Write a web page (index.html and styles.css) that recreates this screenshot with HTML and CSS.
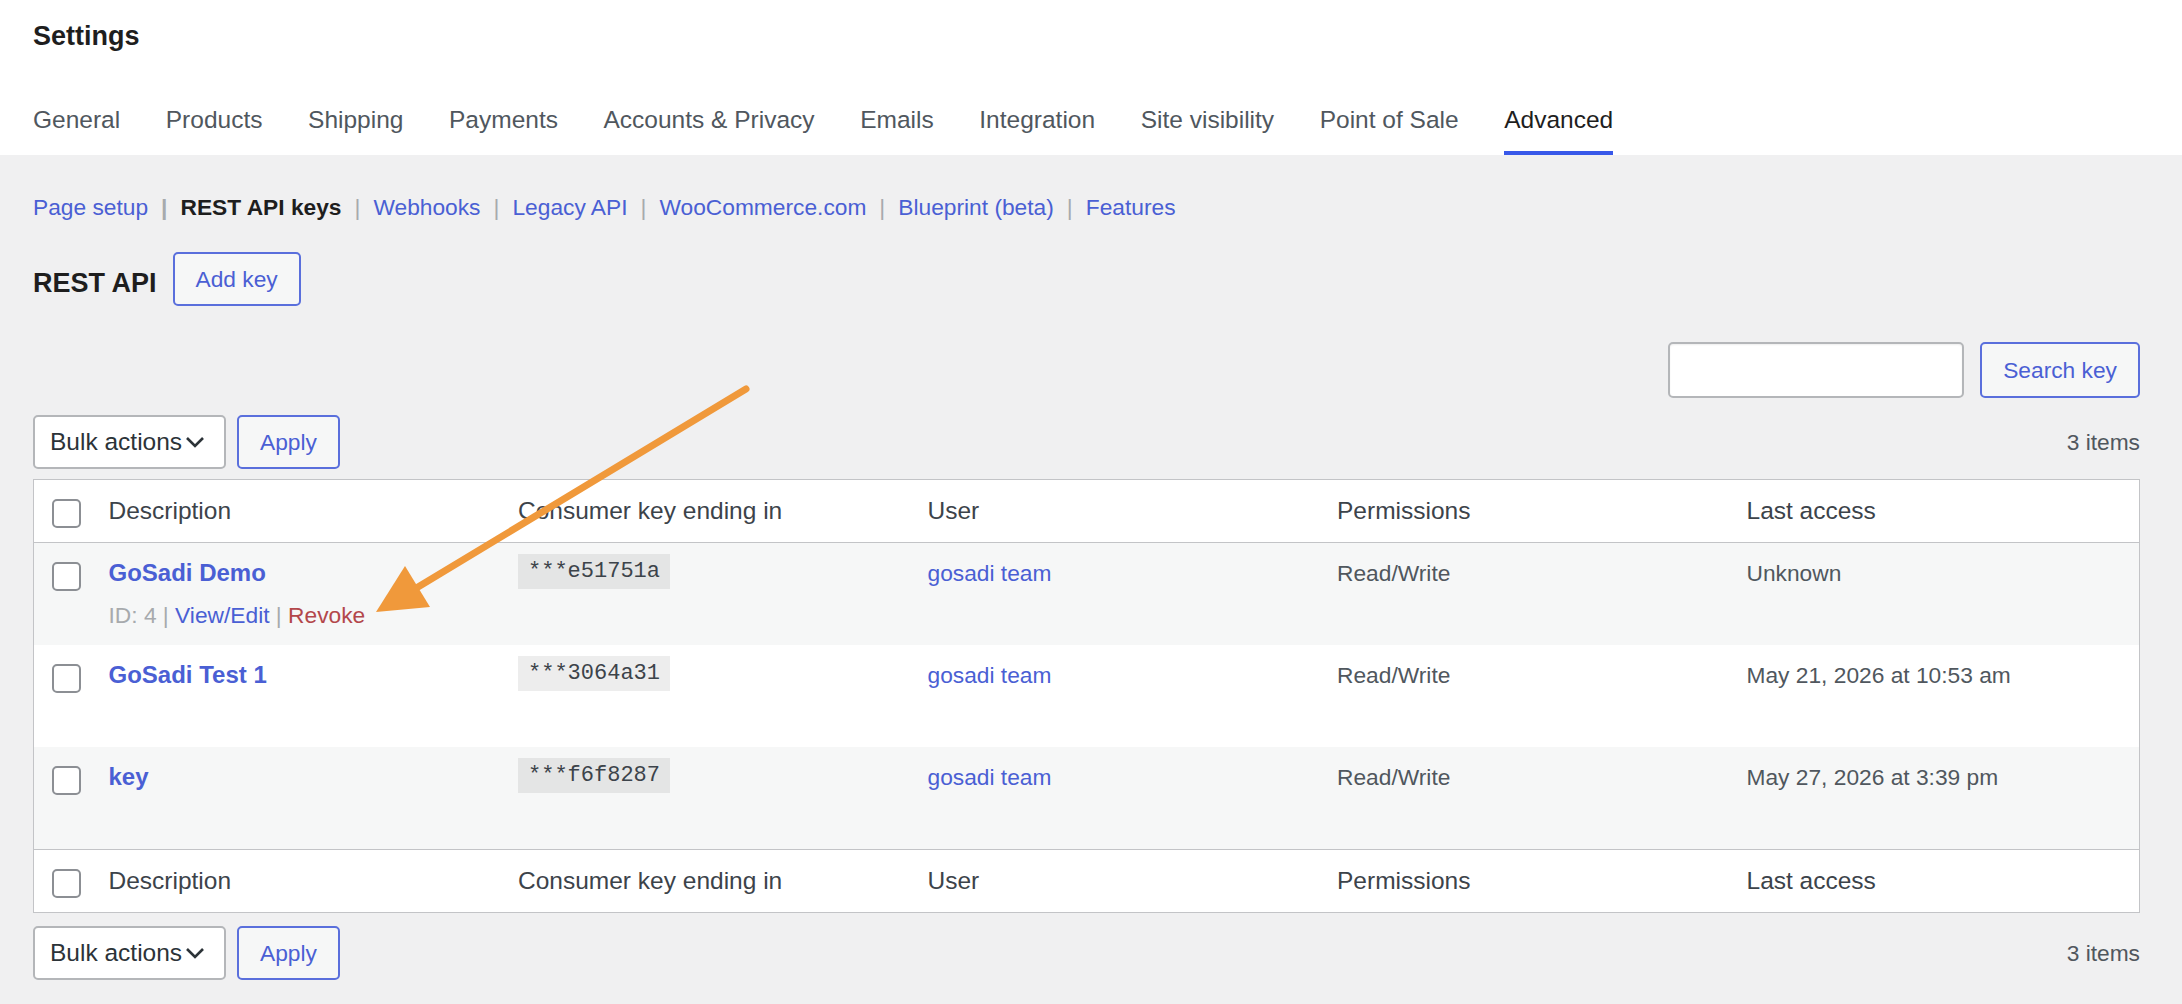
FILE: index.html
```html
<!DOCTYPE html>
<html lang="en">
<head>
  <meta charset="UTF-8" />
  <meta name="viewport" content="width=device-width, initial-scale=1.0"/>
  <title>Settings ‹ Advanced ‹ REST API</title>
  <link rel="stylesheet" href="styles.css">
</head>
<body>

  <header class="settings-header">
    <h1>Settings</h1>
    <nav class="tabs">
      <a class="tab" href="#">General</a>
      <a class="tab" href="#">Products</a>
      <a class="tab" href="#">Shipping</a>
      <a class="tab" href="#">Payments</a>
      <a class="tab" href="#">Accounts &amp; Privacy</a>
      <a class="tab" href="#">Emails</a>
      <a class="tab" href="#">Integration</a>
      <a class="tab" href="#">Site visibility</a>
      <a class="tab" href="#">Point of Sale</a>
      <a class="tab active" href="#">Advanced</a>
    </nav>
  </header>

  <div class="wrap">
    <ul class="subnav">
      <li><a href="#">Page setup</a></li>
      <li class="current">REST API keys</li>
      <li><a href="#">Webhooks</a></li>
      <li><a href="#">Legacy API</a></li>
      <li><a href="#">WooCommerce.com</a></li>
      <li><a href="#">Blueprint (beta)</a></li>
      <li><a href="#">Features</a></li>
    </ul>

    <div class="title-row">
      <h2>REST API</h2>
      <a class="button" href="#">Add key</a>
    </div>

    <div class="search-box">
      <input class="search-input" type="search">
      <button class="button" type="button">Search key</button>
    </div>

    <div class="tablenav">
      <div class="bulk">
        <div class="select">
          <span>Bulk actions</span>
          <svg width="20" height="14" viewBox="0 0 20 14"><polyline points="2,3 10,11 18,3" fill="none" stroke="#2c3338" stroke-width="2.6"/></svg>
        </div>
        <button class="button" type="button">Apply</button>
      </div>
      <span class="count">3 items</span>
    </div>

    <table class="keys">
      <thead>
        <tr>
          <th class="check-column"><input class="check" type="checkbox"></th>
          <th class="col">Description</th>
          <th class="col">Consumer key ending in</th>
          <th class="col">User</th>
          <th class="col">Permissions</th>
          <th>Last access</th>
        </tr>
      </thead>
      <tbody>
        <tr>
          <td class="check-column"><input class="check" type="checkbox"></td>
          <td>
            <a class="row-title" href="#">GoSadi Demo</a>
            <div class="row-actions">ID: 4 | <a href="#">View/Edit</a> | <a class="revoke" href="#">Revoke</a></div>
          </td>
          <td><code>***e51751a</code></td>
          <td><a href="#">gosadi team</a></td>
          <td>Read/Write</td>
          <td>Unknown</td>
        </tr>
        <tr>
          <td class="check-column"><input class="check" type="checkbox"></td>
          <td>
            <a class="row-title" href="#">GoSadi Test 1</a>
            <div class="row-actions hidden">ID: 3 | <a href="#">View/Edit</a> | <a class="revoke" href="#">Revoke</a></div>
          </td>
          <td><code>***3064a31</code></td>
          <td><a href="#">gosadi team</a></td>
          <td>Read/Write</td>
          <td>May 21, 2026 at 10:53 am</td>
        </tr>
        <tr>
          <td class="check-column"><input class="check" type="checkbox"></td>
          <td>
            <a class="row-title" href="#">key</a>
            <div class="row-actions hidden">ID: 5 | <a href="#">View/Edit</a> | <a class="revoke" href="#">Revoke</a></div>
          </td>
          <td><code>***f6f8287</code></td>
          <td><a href="#">gosadi team</a></td>
          <td>Read/Write</td>
          <td>May 27, 2026 at 3:39 pm</td>
        </tr>
      </tbody>
      <tfoot>
        <tr>
          <th class="check-column"><input class="check" type="checkbox"></th>
          <th>Description</th>
          <th>Consumer key ending in</th>
          <th>User</th>
          <th>Permissions</th>
          <th>Last access</th>
        </tr>
      </tfoot>
    </table>

    <div class="tablenav bottom">
      <div class="bulk">
        <div class="select">
          <span>Bulk actions</span>
          <svg width="20" height="14" viewBox="0 0 20 14"><polyline points="2,3 10,11 18,3" fill="none" stroke="#2c3338" stroke-width="2.6"/></svg>
        </div>
        <button class="button" type="button">Apply</button>
      </div>
      <span class="count">3 items</span>
    </div>
  </div>

  <!-- annotation arrow pointing at Revoke -->
  <svg class="callout" width="2182" height="1004" viewBox="0 0 2182 1004">
    <line x1="746" y1="389" x2="418" y2="587" stroke="#f0993b" stroke-width="7" stroke-linecap="round"/>
    <polygon points="376,612 430,607 405,566" fill="#f0993b"/>
  </svg>

</body>
</html>
```

FILE: styles.css
```css
* {
  box-sizing: border-box;
}

html, body {
  margin: 0;
  padding: 0;
  background: #f0f0f1;
  font-family: "Liberation Sans", Arial, sans-serif;
  font-size: 22.75px;
  color: #3c434a;
}

body {
  position: relative;
  min-height: 1004px;
}

a {
  color: #4a5fd4;
  text-decoration: none;
}

.settings-header {
  background: #fff;
  padding: 0 42px 0 33px;
}

.settings-header h1 {
  margin: 0;
  font-size: 27px;
  line-height: 73px;
  font-weight: 700;
  color: #1e1e1e;
}

.tabs {
  display: flex;
  gap: 45.6px;
}

.tab {
  font-size: 24.5px;
  line-height: 34px;
  padding: 30px 0 14px;
  border-bottom: 4px solid transparent;
  color: #50575e;
}

.tab.active {
  color: #1e1e1e;
  border-bottom-color: #3858e9;
}

.wrap {
  padding: 0 42px 40px 33px;
}

.subnav {
  list-style: none;
  margin: 35px 0 0;
  padding: 0;
  display: flex;
  line-height: 34px;
}

.subnav li + li::before {
  content: "|";
  color: #a7aaad;
  margin: 0 13px;
}

.subnav .current {
  color: #1e1e1e;
  font-weight: 700;
}

.title-row {
  display: flex;
  align-items: center;
  gap: 16px;
  margin-top: 28px;
}

.title-row h2 {
  margin: 9px 0 0;
  font-size: 27px;
  line-height: 27px;
  font-weight: 700;
  color: #1e1e1e;
}

.button {
  display: inline-flex;
  align-items: center;
  height: 54px;
  padding: 0 21px;
  border: 2px solid #5a6fdc;
  border-radius: 5px;
  background: #f6f7f7;
  color: #4a5fd4;
  font-family: inherit;
  font-size: 22.75px;
  cursor: pointer;
}

.search-box {
  display: flex;
  justify-content: flex-end;
  gap: 16px;
  margin-top: 36px;
}

.search-input {
  width: 296px;
  height: 56px;
  border: 2px solid #b4b6b9;
  border-radius: 5px;
  background: #fff;
  box-shadow: inset 0 1px 2px rgba(0, 0, 0, 0.07);
  font-family: inherit;
}

.search-box .button {
  height: 56px;
}

.tablenav {
  display: flex;
  justify-content: space-between;
  align-items: center;
  margin-top: 17px;
}

.tablenav.bottom {
  margin-top: 13px;
}

.bulk {
  display: flex;
  gap: 11px;
}

.select {
  width: 193px;
  height: 54px;
  display: flex;
  align-items: center;
  gap: 3px;
  padding: 0 0 0 15px;
  background: #fff;
  border: 2px solid #b4b6b9;
  border-radius: 5px;
  font-size: 24.5px;
  white-space: nowrap;
  color: #2c3338;
}

.select svg {
  flex-shrink: 0;
}

.count {
  color: #50575e;
}

.keys {
  width: 100%;
  margin-top: 10px;
  border: 1px solid #c3c4c7;
  border-collapse: collapse;
  table-layout: fixed;
  background: #fff;
}

.keys th,
.keys td {
  text-align: left;
  vertical-align: top;
  padding: 14px 10px;
  line-height: 32px;
}

.keys thead th,
.keys tfoot th {
  font-size: 24.5px;
  font-weight: 400;
  line-height: 34px;
  color: #3c434a;
}

.keys thead th {
  border-bottom: 1px solid #c3c4c7;
}

.keys tfoot th {
  border-top: 1px solid #c3c4c7;
}

.keys .check-column {
  width: 65px;
  padding: 19px 0 0 18px;
}

.keys .col {
  width: 409.5px;
}

.keys tbody tr:nth-child(odd) {
  background: #f6f7f7;
}

.keys tbody td {
  color: #50575e;
}

.check {
  appearance: none;
  display: block;
  width: 29px;
  height: 29px;
  margin: 0;
  border: 2px solid #8c8f94;
  border-radius: 5px;
  background: #fff;
}

.row-title {
  font-size: 24px;
  font-weight: 700;
}

.row-actions {
  padding-top: 10px;
  color: #a7aaad;
}

.row-actions.hidden {
  visibility: hidden;
}

.revoke {
  color: #b3474b;
}

code {
  display: inline-block;
  vertical-align: top;
  margin-top: -3px;
  padding: 3px 10px;
  line-height: 29px;
  font-family: "Liberation Mono", monospace;
  font-size: 22px;
  color: #3c434a;
  background: rgba(0, 0, 0, 0.07);
}

.callout {
  position: absolute;
  top: 0;
  left: 0;
  pointer-events: none;
}
```
